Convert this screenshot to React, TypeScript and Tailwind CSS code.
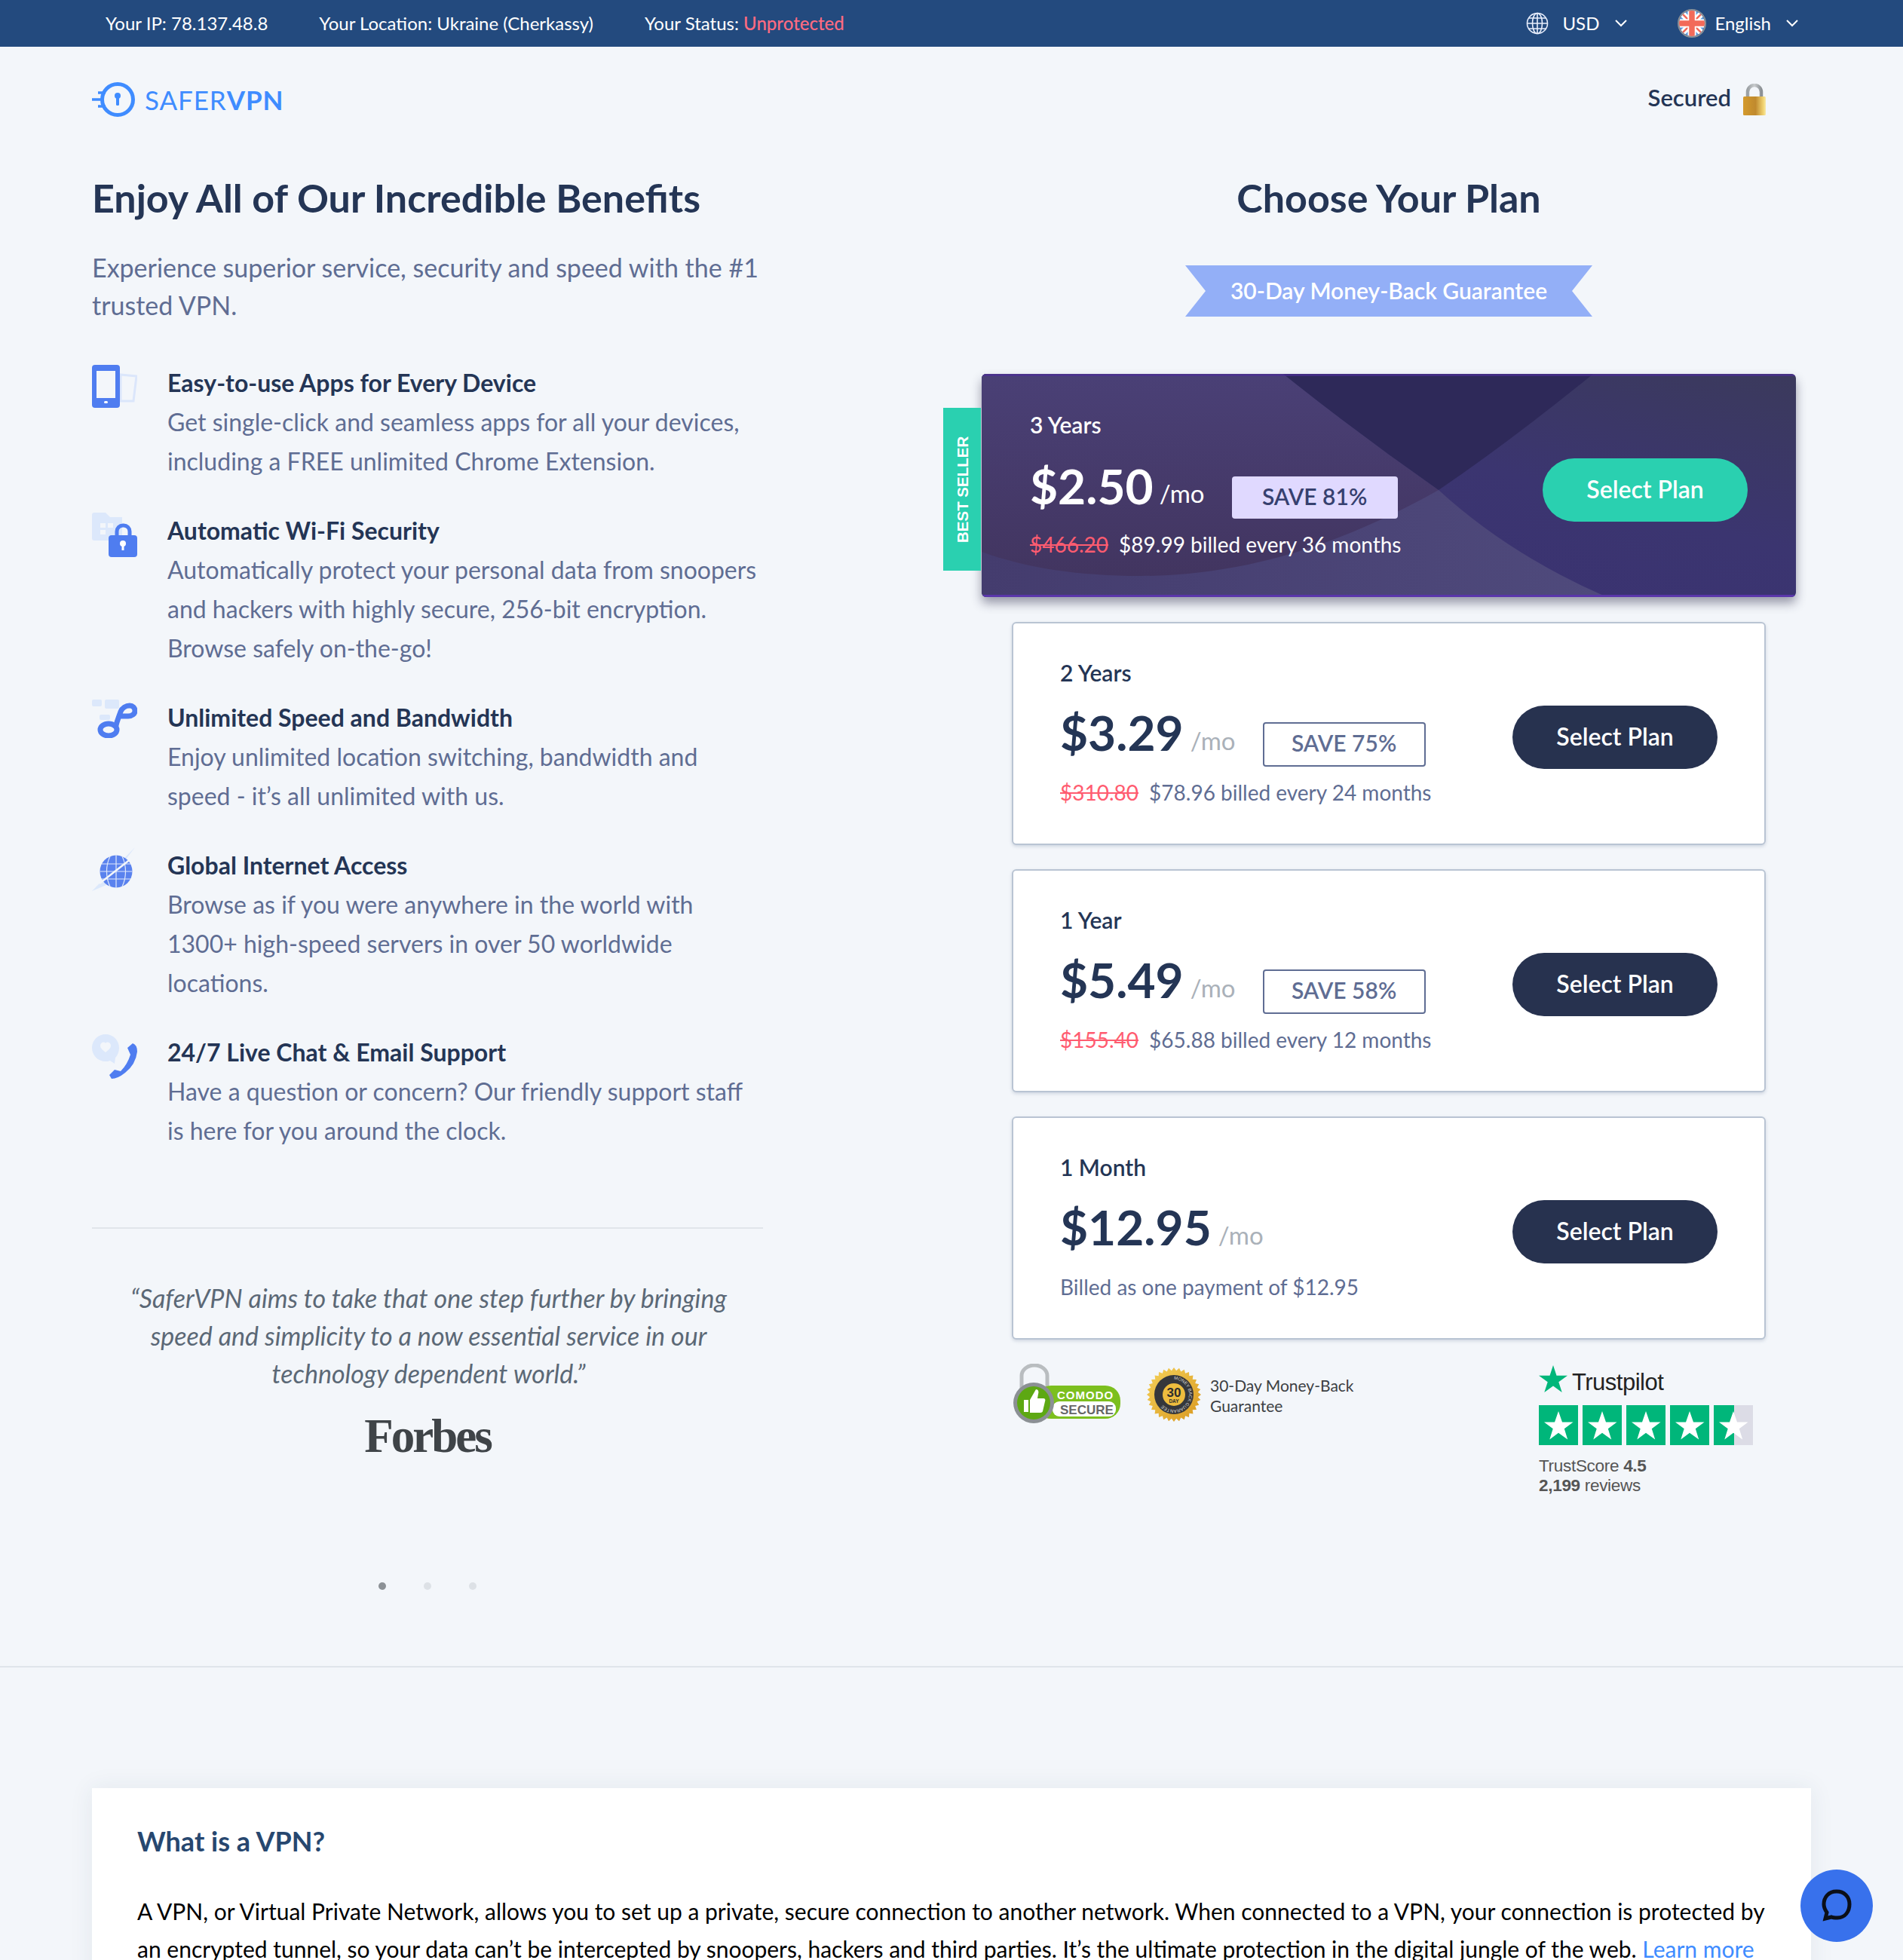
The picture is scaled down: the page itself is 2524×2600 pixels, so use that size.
import React from "react";

const Chevron = () => (
  <svg width="20" height="12" viewBox="0 0 20 12" fill="none" stroke="#fff" strokeWidth="2"><path d="M3 2l7 7 7-7" /></svg>
);

const Globe = () => (
  <svg width="30" height="30" viewBox="0 0 30 30" fill="none" stroke="#e8eefc" strokeWidth="1.6">
    <circle cx="15" cy="15" r="13.5" />
    <ellipse cx="15" cy="15" rx="6.5" ry="13.5" />
    <path d="M15 1.5v27M1.5 15h27M3.5 8h23M3.5 22h23" />
  </svg>
);

const Flag = () => (
  <svg width="38" height="38" viewBox="0 0 38 38">
    <defs><clipPath id="fc"><circle cx="19" cy="19" r="17" /></clipPath></defs>
    <g clipPath="url(#fc)">
      <rect width="38" height="38" fill="#5b9ae0" />
      <path d="M0 0L38 38M38 0L0 38" stroke="#fff" strokeWidth="8" />
      <path d="M0 0L38 38M38 0L0 38" stroke="#f26a5a" strokeWidth="2.5" />
      <path d="M19 0v38M0 19h38" stroke="#fff" strokeWidth="11" />
      <path d="M19 0v38M0 19h38" stroke="#f26a5a" strokeWidth="7.5" />
    </g>
    <circle cx="19" cy="19" r="18" fill="none" stroke="#8a8f96" strokeWidth="2" />
  </svg>
);

const Logo = () => (
  <svg width="58" height="48" viewBox="0 0 58 48" fill="none">
    <circle cx="34" cy="24" r="20.500" stroke="#3f8cff" strokeWidth="5" />
    <circle cx="34" cy="19" r="4" fill="#3f8cff" />
    <rect x="32" y="19" width="4" height="13" rx="1.500" fill="#3f8cff" />
    <path d="M8 15h10M0 24h14M8 33h10" stroke="#3f8cff" strokeWidth="3.500" />
  </svg>
);

const Padlock = () => (
  <svg width="30" height="42" viewBox="0 0 30 42">
    <defs>
      <linearGradient id="pg" x1="0" y1="0" x2="1" y2="0">
        <stop offset="0" stopColor="#d49a2c" /><stop offset="0.55" stopColor="#c08a2e" /><stop offset="0.9" stopColor="#f2d573" /><stop offset="1" stopColor="#f7e9a8" />
      </linearGradient>
      <linearGradient id="sh" x1="0" y1="0" x2="1" y2="0">
        <stop offset="0" stopColor="#9ba0a3" /><stop offset="0.5" stopColor="#c9ccce" /><stop offset="1" stopColor="#8b9094" />
      </linearGradient>
    </defs>
    <path d="M6 19V11a9 9 0 0 1 18 0v8" fill="none" stroke="url(#sh)" strokeWidth="4.500" />
    <rect y="17" width="30" height="25" rx="1.500" fill="url(#pg)" />
  </svg>
);

const IconDevice = () => (
  <svg width="60" height="57" viewBox="0 0 60 57">
    <path d="M38 13l21 2-4 33H38z" fill="none" stroke="#dbe6fb" strokeWidth="3" />
    <rect x="0" y="0" width="37" height="57" rx="4" fill="#4f7df0" />
    <rect x="6" y="8" width="25" height="36" fill="#f3f6fa" />
    <rect x="16" y="48" width="5" height="3" rx="1.500" fill="#fff" />
  </svg>
);

const IconLock = () => (
  <svg width="60" height="59" viewBox="0 0 60 59">
    <path d="M0 3a3 3 0 0 1 3-3h15l6 6h16v31H3a3 3 0 0 1-3-3z" fill="#dce8fb" />
    <path d="M11 14h7v6h-7zM21 14h7v6h-7zM11 23h7v6h-7z" fill="#f3f6fa" />
    <path d="M33 33v-8a8 8 0 0 1 8-8h1a8 8 0 0 1 8 8v8" fill="none" stroke="#4f7df0" strokeWidth="5" />
    <rect x="22" y="30" width="38" height="29" rx="4" fill="#4f7df0" />
    <circle cx="41" cy="41" r="4" fill="#fff" /><rect x="39.500" y="42" width="3" height="8" fill="#fff" />
  </svg>
);

const IconInfinity = () => (
  <svg width="60" height="51" viewBox="0 0 60 51" fill="none">
    <rect x="0" y="0" width="13" height="9" rx="2" fill="#dce8fb" /><rect x="17" y="0" width="19" height="12" rx="2" fill="#dce8fb" /><rect x="10" y="20" width="14" height="7" rx="2" fill="#dce8fb" />
    <ellipse cx="22" cy="40" rx="11" ry="8" stroke="#4f7df0" strokeWidth="7" />
    <path d="M31 38C33 28 36 22 38 16c2-5 7-8 12-8 4 0 7 3 7 7 0 4-4 7-9 7H38" stroke="#4f7df0" strokeWidth="7" />
  </svg>
);

const IconGlobe = () => (
  <svg width="60" height="58" viewBox="0 0 60 58">
    <path d="M0 58L57 0 19 50z" fill="#dce8fb" />
    <circle cx="32" cy="32" r="21.500" fill="#5a82ee" />
    <path d="M10.500 32h43M13 22h38M13 42h38M32 10v44M24 12c-6 12-6 28 0 40M40 12c6 12 6 28 0 40" stroke="#dfe8fb" strokeWidth="1.200" fill="none" />
    <path d="M10 48L52 15" stroke="#f3f6fa" strokeWidth="2.500" />
  </svg>
);

const IconPhone = () => (
  <svg width="60" height="59" viewBox="0 0 60 59">
    <path d="M18 0C8 0 0 8 0 18s8 18 18 18c2 0 4 0 6-1l6 4 1-8c3-3 5-8 5-13C36 8 28 0 18 0z" fill="#dce8fb" />
    <path d="M18 12c-2-3-7-1-7 3 0 4 4 6 7 9 3-3 7-5 7-9 0-4-5-6-7-3z" fill="#f3f6fa" />
    <path d="M47 18L54 12Q60 14 60 23Q58 40 44 51Q34 59 26 59L23 54L30 47L38 49Q47 40 51 27Z" fill="#4f7df0" />
  </svg>
);

const features = [
  { icon: <IconDevice />, title: "Easy-to-use Apps for Every Device", lines: ["Get single-click and seamless apps for all your devices,", "including a FREE unlimited Chrome Extension."] },
  { icon: <IconLock />, title: "Automatic Wi-Fi Security", lines: ["Automatically protect your personal data from snoopers", "and hackers with highly secure, 256-bit encryption.", "Browse safely on-the-go!"] },
  { icon: <IconInfinity />, title: "Unlimited Speed and Bandwidth", lines: ["Enjoy unlimited location switching, bandwidth and", "speed - it’s all unlimited with us."] },
  { icon: <IconGlobe />, title: "Global Internet Access", lines: ["Browse as if you were anywhere in the world with", "1300+ high-speed servers in over 50 worldwide", "locations."] },
  { icon: <IconPhone />, title: "24/7 Live Chat & Email Support", lines: ["Have a question or concern? Our friendly support staff", "is here for you around the clock."] },
];

const plans = [
  { term: "2 Years", price: "$3.29", save: "SAVE 75%", old: "$310.80", billed: "$78.96 billed every 24 months" },
  { term: "1 Year", price: "$5.49", save: "SAVE 58%", old: "$155.40", billed: "$65.88 billed every 12 months" },
  { term: "1 Month", price: "$12.95", save: "", old: "", billed: "Billed as one payment of $12.95" },
];

const CardArt = () => (
  <svg className="absolute inset-0 w-full h-full" viewBox="0 0 1080 296" preserveAspectRatio="none">
    <defs>
      <linearGradient id="base" x1="0" y1="1" x2="1" y2="0"><stop offset="0" stopColor="#3a3072" /><stop offset="0.6" stopColor="#3b3570" /><stop offset="1" stopColor="#3b3a5c" /></linearGradient>
      <linearGradient id="left" x1="0" y1="0" x2="0" y2="1"><stop offset="0" stopColor="#4a4076" /><stop offset="1" stopColor="#423560" /></linearGradient>
      <linearGradient id="low" x1="0" y1="0" x2="1" y2="0"><stop offset="0" stopColor="#443c6e" /><stop offset="1" stopColor="#4f4a7c" /></linearGradient>
    </defs>
    <rect width="1080" height="296" fill="url(#base)" />
    <path d="M0 0H400Q500 80 606 154Q700 240 829 296H0z" fill="url(#low)" />
    <path d="M0 0H400Q500 80 606 154C480 225 350 268 211 268C130 268 60 258 0 236z" fill="url(#left)" />
    <path d="M400 0H811Q700 90 606 154Q500 80 400 0z" fill="#2e2959" />
    <rect width="1080" height="3" fill="#4a2c94" opacity="0.7" />
    <rect y="293" width="1080" height="3" fill="#5a36ab" />
  </svg>
);

const Comodo = () => (
  <svg width="144" height="80" viewBox="0 0 144 80">
    <path d="M11 34V16a17 14 0 0 1 34 0v18" fill="none" stroke="#b9bdc0" strokeWidth="5" />
    <rect x="30" y="29" width="112" height="44" rx="20" fill="#7cbf1e" />
    <rect x="52" y="50" width="84" height="20" rx="9" fill="#fff" />
    <text x="58" y="47" fontFamily="Liberation Sans" fontSize="15" fontWeight="700" fill="#fff" letterSpacing="1">COMODO</text>
    <text x="62" y="67" fontFamily="Liberation Sans" fontSize="17" fontWeight="700" fill="#666">SECURE</text>
    <circle cx="27" cy="52" r="27" fill="#8b9094" />
    <circle cx="27" cy="52" r="22" fill="#5da813" />
    <path d="M14 48h6v16h-6zM22 48l8-14c3 0 4 3 3 6l-1 6h8c2 0 3 2 2 4l-3 13c0 1-2 2-3 2H22z" fill="#fff" />
  </svg>
);

const Medal = () => {
  const pts: string[] = [];
  for (let i = 0; i < 64; i++) {
    const a = (i / 64) * Math.PI * 2;
    const r = i % 2 ? 32 : 36;
    pts.push(`${36 + r * Math.cos(a)},${37 + r * Math.sin(a)}`);
  }
  return (
    <svg width="72" height="74" viewBox="0 0 72 74">
      <defs>
        <linearGradient id="gold" x1="0" y1="0" x2="1" y2="1"><stop offset="0" stopColor="#f5d25a" /><stop offset="1" stopColor="#d9981f" /></linearGradient>
        <path id="mring" d="M36 17a20 20 0 1 1-.1 0" />
      </defs>
      <polygon points={pts.join(" ")} fill="url(#gold)" />
      <circle cx="36" cy="37" r="26" fill="#35373b" />
      <circle cx="36" cy="37" r="15" fill="#eebd3e" />
      <text fontFamily="Liberation Sans" fontSize="6" fill="#d8d8d8"><textPath href="#mring">MONEY BACK GUARANTEE</textPath></text>
      <text x="36" y="40" textAnchor="middle" fontFamily="Liberation Sans" fontWeight="700" fontSize="17" fill="#2d2d2d">30</text>
      <text x="36" y="48" textAnchor="middle" fontFamily="Liberation Sans" fontWeight="700" fontSize="6.500" fill="#2d2d2d">DAY</text>
    </svg>
  );
};

const TpStar = ({ half }: { half?: boolean }) => (
  <div className={"relative w-[52px] h-[53px] " + (half ? "bg-[#dcdce6]" : "bg-[#00b67a]")}>
    {half && <div className="absolute left-0 top-0 h-full w-[27px] bg-[#00b67a]" />}
    <svg className="absolute inset-0" viewBox="0 0 52 53"><path d="M26 8l5 14.500h14.500l-11.700 8.800 4.400 14.200L26 36.700l-11.700 8.800 4.400-14.200-11.700-8.800H21z" fill="#fff" /></svg>
  </div>
);

export default function App() {
  return (
    <div className="relative h-[2600px] w-[2524px] overflow-hidden bg-[#f3f6fa] font-['Lato','sans-serif']">
      <div className="flex h-[62px] items-center bg-[#234a7e] pl-[140px] text-[24px] text-white">
        <span>Your IP: 78.137.48.8</span>
        <span className="ml-[68px]">Your Location: Ukraine (Cherkassy)</span>
        <span className="ml-[68px]">Your Status: <span className="font-medium text-[#ff6b81]">Unprotected</span></span>
        <div className="ml-auto flex items-center pr-[137px]">
          <Globe />
          <span className="ml-[18px]">USD</span>
          <span className="ml-[19px]"><Chevron /></span>
          <span className="ml-[65px]"><Flag /></span>
          <span className="ml-[11px]">English</span>
          <span className="ml-[18px]"><Chevron /></span>
        </div>
      </div>

      <div className="flex h-[140px] items-center pl-[122px] pr-[182px]">
        <Logo />
        <span className="ml-[12px] text-[35px] leading-none tracking-[0.9px] text-[#3f8cff]">SAFER<span className="font-bold">VPN</span></span>
        <div className="ml-auto flex items-center gap-[16px]">
          <span className="mb-[6px] text-[31px] font-semibold text-[#243555]">Secured</span>
          <Padlock />
        </div>
      </div>

      <div className="flex h-[2010px] border-b-2 border-[#dfe4ea] pl-[122px]">
        <div className="w-[890px]">
          <h1 className="pt-[28px] text-[52px] font-bold leading-[64px] text-[#243555]">Enjoy All of Our Incredible Benefits</h1>
          <p className="mt-[36px] text-[34px] leading-[50px] text-[#5f6d93]">Experience superior service, security and speed with the #1<br />trusted VPN.</p>
          <div className="mt-[52px] flex flex-col gap-[40px]">
            {features.map((f) => (
              <div key={f.title} className="flex">
                <div className="w-[100px] shrink-0 pt-[2px]">{f.icon}</div>
                <div className="text-[32px] leading-[52px] text-[#5f6d93]">
                  <div className="font-bold text-[#243555]">{f.title}</div>
                  {f.lines.map((l) => <div key={l}>{l}</div>)}
                </div>
              </div>
            ))}
          </div>
          <div className="mt-[102px] border-t-2 border-[#e1e5ea]" />
          <div className="mt-[67px] pl-[3px] text-center text-[34px] italic leading-[50px] text-[#5b6876]">
            <div>“SaferVPN aims to take that one step further by bringing</div>
            <div>speed and simplicity to a now essential service in our</div>
            <div>technology dependent world.”</div>
          </div>
          <div className="mt-[23px] text-center font-['Liberation_Serif','serif'] text-[63px] font-bold leading-[70px] tracking-[-3px] text-[#3f4448]">Forbes</div>
          <div className="mt-[159px] flex justify-center gap-[50px]">
            <span className="h-[10px] w-[10px] rounded-full bg-[#8c9196]" />
            <span className="h-[10px] w-[10px] rounded-full bg-[#dde1e6]" />
            <span className="h-[10px] w-[10px] rounded-full bg-[#dde1e6]" />
          </div>
        </div>

        <div className="ml-[290px] w-[1080px]">
          <h1 className="pt-[28px] text-center text-[52px] font-bold leading-[64px] text-[#243555]">Choose Your Plan</h1>
          <div className="mt-[58px] flex justify-center">
            <div className="flex h-[68px] w-[540px] items-center justify-center bg-[#93aff7] pb-[2px] text-[30px] font-semibold text-white [clip-path:polygon(0_0,100%_0,95%_50%,100%_100%,0_100%,5%_50%)]">30-Day Money-Back Guarantee</div>
          </div>

          <div className="relative mt-[76px] h-[296px] rounded-[6px] shadow-[0_8px_14px_rgba(40,40,70,0.45)]">
            <div className="absolute left-[-51px] top-[45px] flex h-[216px] w-[50px] items-center justify-center bg-[#2ad0b0]">
              <span className="ml-[3px] whitespace-nowrap font-['Liberation_Sans','sans-serif'] text-[20.500px] font-bold text-white [transform:rotate(-90deg)]">BEST SELLER</span>
            </div>
            <div className="relative flex h-full items-center overflow-hidden rounded-[6px] pl-[64px] pr-[64px] text-white">
              <CardArt />
              <div className="relative flex-1">
                <div className="text-[30px] font-semibold leading-[36px]">3 Years</div>
                <div className="mt-[19px] flex items-end">
                  <span className="text-[64px] font-bold leading-[90px]">$2.50</span>
                  <span className="mb-[14px] ml-[8px] text-[33px] leading-[44px]">/mo</span>
                  <span className="mb-[2px] ml-[36px] flex h-[56px] w-[220px] items-center justify-center rounded-[4px] bg-[#e0d9ff] pb-[3px] text-[30px] font-semibold text-[#36406f]">SAVE 81%</span>
                </div>
                <div className="mt-[11px] text-[28px] leading-[42px]"><span className="text-[#ff5c70] line-through">$466.20</span><span className="ml-[14px]">$89.99 billed every 36 months</span></div>
              </div>
              <button className="relative mt-[12px] h-[84px] w-[272px] rounded-full bg-[#2ad0b0] pb-[3px] text-[32px] font-semibold text-white">Select Plan</button>
            </div>
          </div>

          <div className="mx-[40px] mt-[33px] flex flex-col gap-[32px]">
            {plans.map((p) => (
              <div key={p.term} className="flex h-[296px] items-center rounded-[6px] border-2 border-[#b9c4d3] bg-white pl-[62px] pr-[62px] shadow-[0_2px_4px_rgba(100,120,150,0.25)]">
                <div className="flex-1">
                  <div className="text-[30px] font-semibold leading-[36px] text-[#243555]">{p.term}</div>
                  <div className="mt-[17px] flex items-end">
                    <span className="text-[64px] font-bold leading-[90px] text-[#243555]">{p.price}</span>
                    <span className="mb-[13px] ml-[9px] text-[33px] leading-[44px] text-[#aab1b9]">/mo</span>
                    {p.save && <span className="mb-[0px] ml-[36px] flex h-[59px] w-[216px] items-center justify-center rounded-[4px] border-2 border-[#5f6d93] pb-[4px] text-[30px] font-semibold text-[#5f6d93]">{p.save}</span>}
                  </div>
                  <div className="mt-[13px] text-[28px] leading-[42px] text-[#5f6d93]">
                    {p.old && <span className="mr-[14px] text-[#ff5c70] line-through">{p.old}</span>}
                    {p.billed}
                  </div>
                </div>
                <button className="mt-[10px] h-[84px] w-[272px] rounded-full bg-[#27324f] pb-[2px] text-[32px] font-semibold text-white">Select Plan</button>
              </div>
            ))}
          </div>

          <div className="mx-[42px] mt-[32px] flex">
            <Comodo />
            <div className="ml-[33px] mt-[4px]"><Medal /></div>
            <div className="ml-[12px] mt-[15px] w-[220px] text-[21px] leading-[27px] text-[#3c4043]">30-Day Money-Back<br />Guarantee</div>
            <div className="ml-[216px] font-['Liberation_Sans','sans-serif']">
              <div className="flex h-[40px] items-center">
                <svg width="38" height="36" viewBox="0 0 38 36"><path d="M19 0l4.500 13.800H38l-11.700 8.500L30.700 36 19 27.500 7.300 36l4.400-13.700L0 13.800h14.500z" fill="#00b67a" /></svg>
                <span className="ml-[6px] mt-[8px] text-[31px] leading-none tracking-[-0.5px] text-[#222]">Trustpilot</span>
              </div>
              <div className="mt-[15px] flex gap-[6px]">
                <TpStar /><TpStar /><TpStar /><TpStar /><TpStar half />
              </div>
              <div className="mt-[15px] text-[22.500px] leading-[26px] tracking-[-0.3px] text-[#555]">TrustScore <b>4.5</b><br /><b>2,199</b> reviews</div>
            </div>
          </div>
        </div>
      </div>

      <div className="mx-[122px] mt-[160px] h-[400px] bg-white px-[60px] pt-[48px] shadow-[0_0_30px_rgba(40,60,90,0.08)]">
        <h2 className="text-[36px] font-bold leading-[44px] text-[#27476f]">What is a VPN?</h2>
        <p className="mt-[46px] whitespace-nowrap text-[30px] leading-[50px] text-black">A VPN, or Virtual Private Network, allows you to set up a private, secure connection to another network. When connected to a VPN, your connection is protected by<br />an encrypted tunnel, so your data can’t be intercepted by snoopers, hackers and third parties. It’s the ultimate protection in the digital jungle of the web. <span className="text-[#3f8cff]">Learn more</span></p>
      </div>

      <div className="absolute left-[2388px] top-[2480px] flex h-[96px] w-[96px] items-center justify-center rounded-full bg-[#3871ec]">
        <svg width="42" height="46" viewBox="0 0 42 46" fill="none" stroke="#0b0f18" strokeWidth="5" strokeLinecap="round"><path d="M21 4C10 4 4 12 4 21c0 5 2 8 4 11l-2 8 8-2c2 1 5 1 8 1 10 0 16-8 16-18S31 4 21 4z" /></svg>
      </div>
    </div>
  );
}
